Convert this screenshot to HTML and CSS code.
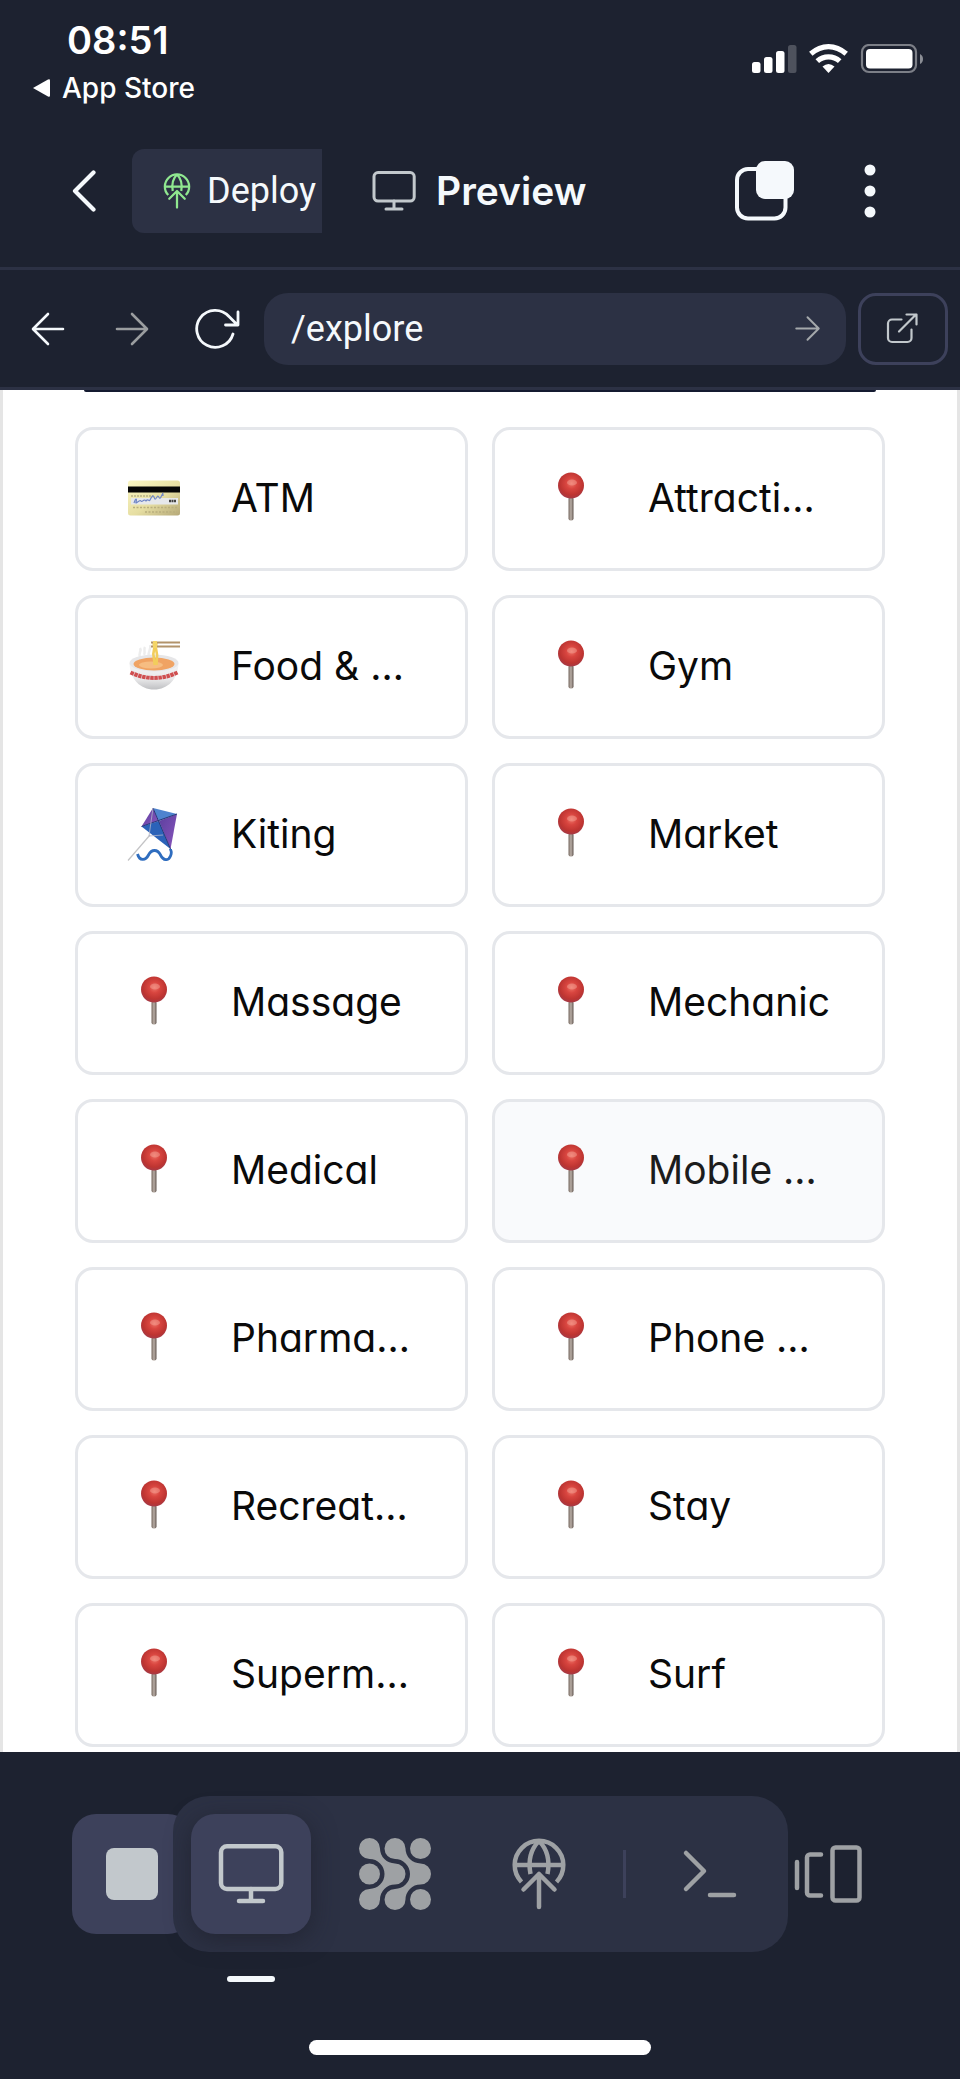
FILE: index.html
```html
<!DOCTYPE html>
<html lang="en">
<head>
<meta charset="utf-8">
<meta name="viewport" content="width=device-width, initial-scale=1">
<title>Preview</title>
<link rel="stylesheet" href="styles.css">
</head>
<body>
<svg class="defs" aria-hidden="true">
  <defs>
    <radialGradient id="ball" cx="0.52" cy="0.42" r="0.6">
      <stop offset="0" stop-color="#ee7468"/>
      <stop offset="0.35" stop-color="#d8453f"/>
      <stop offset="0.75" stop-color="#bd3431"/>
      <stop offset="1" stop-color="#a23a48"/>
    </radialGradient>
    <linearGradient id="stick" x1="0" x2="1" y1="0" y2="0">
      <stop offset="0" stop-color="#75685f"/>
      <stop offset="0.5" stop-color="#b9aea6"/>
      <stop offset="1" stop-color="#5f534d"/>
    </linearGradient>
    <linearGradient id="gold" x1="0" x2="1" y1="0" y2="1">
      <stop offset="0" stop-color="#fbf7c4"/>
      <stop offset="0.55" stop-color="#e6dea2"/>
      <stop offset="1" stop-color="#b5a878"/>
    </linearGradient>
    <linearGradient id="china" x1="0" x2="0" y1="0" y2="1">
      <stop offset="0" stop-color="#f4f4f4"/>
      <stop offset="0.6" stop-color="#e9e9ea"/>
      <stop offset="1" stop-color="#bfc0c3"/>
    </linearGradient>
    <linearGradient id="purple" x1="0" x2="1" y1="0" y2="1">
      <stop offset="0" stop-color="#5b3f9e"/>
      <stop offset="1" stop-color="#8a55bd"/>
    </linearGradient>
    <symbol id="pin" viewBox="0 0 54 54">
      <rect x="24.500" y="26" width="5" height="23.500" rx="2" fill="url(#stick)"/>
      <circle cx="27" cy="14.500" r="13" fill="url(#ball)"/>
      <ellipse cx="28" cy="11.500" rx="5" ry="3" fill="#f7a99c" opacity="0.45"/>
    </symbol>
    <symbol id="card" viewBox="0 0 54 54">
      <rect x="1" y="9.500" width="52" height="35" rx="2.500" fill="url(#gold)"/>
      <rect x="1" y="15.500" width="52" height="6" fill="#050505"/>
      <path d="M4 25h22" stroke="#9b956f" stroke-width="1" stroke-dasharray="2 1"/>
      <rect x="4" y="27" width="47" height="6.500" fill="#e6e8ea"/>
      <path d="M7 32c2-6 3-4 2-1s4-3 5-1 3-3 5 0c2-3 3 1 4-1s3-6 4-3 1 3 3 0 2 4 4 0 2-5 2-1" fill="none" stroke="#6f86c6" stroke-width="1.200"/>
      <path d="M42 30h7" stroke="#444" stroke-width="2.500" stroke-dasharray="2 0.500"/>
      <path d="M6 36.500h44M18 41h32" stroke="#b9ae7e" stroke-width="1.500" stroke-dasharray="2 1.500"/>
    </symbol>
    <symbol id="bowl" viewBox="0 0 54 54">
      <path d="M13 18c-2-4 2-6 0-9M22 17c-2-4 3-7 1-11M17 16c2-3-1-5 1-8" fill="none" stroke="#ededed" stroke-width="2.500"/>
      <path d="M2.500 24C3 40 13 50.500 27 50.500S51 40 51.500 24z" fill="url(#china)"/>
      <ellipse cx="27" cy="24" rx="24.500" ry="8.500" fill="#e6e6e8"/>
      <ellipse cx="27" cy="25" rx="20.500" ry="6.500" fill="#f0a363"/>
      <ellipse cx="24" cy="26" rx="12" ry="3.500" fill="#f6bd82"/>
      <path d="M3.500 33.500Q27 44.500 50.500 33.500" fill="none" stroke="#cf4f50" stroke-width="4" stroke-dasharray="3.500 0.600"/>
      <path d="M26.500 3l.8 6-1 6 1.500 11M29.500 3l-.6 6 1.200 7-.6 10" fill="none" stroke="#f2cd5c" stroke-width="2.600"/>
      <path d="M24 3.500h29M24 7.500h29" stroke="#b2936b" stroke-width="2"/>
      <path d="M28 2v7" stroke="#f4d568" stroke-width="4"/>
    </symbol>
    <symbol id="kite" viewBox="0 0 54 54">
      <path d="M23 28 1 53.500" stroke="#c3c3c5" stroke-width="1.200"/>
      <path d="M26 1 32 14 14.500 19.500z" fill="url(#purple)"/>
      <path d="M26 1 50 7 32 14z" fill="#4e83cf"/>
      <path d="M14.500 19.500 32 14 43.500 42z" fill="#2b62b8"/>
      <path d="M50 7 43.500 42 32 14z" fill="url(#purple)"/>
      <path d="M26 1 43.500 42M14.500 19.500 50 7" stroke="#283a78" stroke-width="1"/>
      <path d="M26 1 22 29l14-1" fill="none" stroke="#aeb4c9" stroke-width="0.800"/>
      <path d="M10.500 47c2 7 8 7 11 1s9-6 12 0 8 6 10 1 0-5 0-7" fill="none" stroke="#2f6dbf" stroke-width="2.800"/>
    </symbol>
    <symbol id="globe" viewBox="0 0 72 72">
      <g fill="none" stroke="currentColor" stroke-width="4.500" stroke-linejoin="round">
        <path d="M18.500 44A24.300 24.300 0 1 1 53.500 44M12 27h48"/>
        <path d="M36 3c-8 8-11 20-8.500 33M36 3c8 8 11 20 8.500 33"/>
        <path d="M20.500 51.500 36 36l15.500 15.500M36 36v33" stroke-linecap="round"/>
      </g>
    </symbol>
    <symbol id="monitor" viewBox="0 0 72 72">
      <g fill="none" stroke="currentColor" stroke-width="4.500" stroke-linecap="round">
        <rect x="6" y="8.300" width="60.300" height="42.700" rx="6"/>
        <path d="M36 51v12M24 63h24"/>
      </g>
    </symbol>
    <symbol id="arrow" viewBox="0 0 36 36">
      <path d="M3 18h29M18 3l15 15-15 15" fill="none" stroke="currentColor" stroke-width="2.600" stroke-linecap="round" stroke-linejoin="round"/>
    </symbol>
  </defs>
</svg>

<header class="status">
  <div class="clock-block">
    <time class="clock">08:51</time>
    <a class="return" href="#"><svg width="18" height="18" viewBox="0 0 18 18"><path d="M1 9 16 .5Q18-.5 18 1.500v15Q18 18.500 16 17.500z" fill="#fff"/></svg>App Store</a>
  </div>
  <svg class="indicators" width="172" height="32" viewBox="0 0 172 32" role="img" aria-label="Signal, Wi-Fi and battery">
    <g fill="#fff">
      <rect x="0" y="18" width="8.500" height="11" rx="2.500"/>
      <rect x="12" y="13" width="8.500" height="16" rx="2.500"/>
      <rect x="24" y="7" width="8.500" height="22" rx="2.500"/>
      <rect x="36" y="1" width="8.500" height="28" rx="2.500" opacity="0.22"/>
      <path d="M76.500 29 70.500 22.500Q76.500 17.500 82.500 22.500z"/>
    </g>
    <g fill="none" stroke="#fff" stroke-width="5.200">
      <path d="M58.800 9.800Q67 2.600 76.500 2.600T94.200 9.800"/>
      <path d="M65.300 17.200Q70 12.800 76.500 12.800T87.700 17.200"/>
    </g>
    <rect x="110" y="1" width="54" height="27" rx="7" fill="none" stroke="#7c7f87" stroke-width="2.200"/>
    <rect x="114" y="5" width="46.500" height="19.500" rx="4" fill="#fff"/>
    <path d="M168 10q3 1.500 3 5t-3 5z" fill="#8b8e95"/>
  </svg>
</header>

<nav class="tabs" aria-label="Workspace">
  <button class="icon-button back" aria-label="Back"><svg width="24" height="42" viewBox="0 0 24 42"><path d="M21.500 2.500 3 21l18.500 18.500" fill="none" stroke="currentColor" stroke-width="4.200" stroke-linecap="round" stroke-linejoin="round"/></svg></button>
  <button class="deploy"><svg class="globe-small"><use href="#globe"/></svg><span>Deploy</span></button>
  <button class="preview"><svg class="monitor-small"><use href="#monitor"/></svg><span>Preview</span></button>
  <button class="icon-button copies" aria-label="Tabs"><svg width="60" height="60" viewBox="0 0 60 60"><rect x="2" y="8" width="48.500" height="49.500" rx="11" fill="none" stroke="currentColor" stroke-width="4"/><rect x="21" y="0" width="38" height="38" rx="9" fill="currentColor"/></svg></button>
  <button class="icon-button more" aria-label="More"><svg width="12" height="54" viewBox="0 0 12 54"><g fill="currentColor"><circle cx="6" cy="6" r="5.500"/><circle cx="6" cy="27" r="5.500"/><circle cx="6" cy="48" r="5.500"/></g></svg></button>
</nav>

<form class="toolbar">
  <button type="button" class="icon-button" aria-label="Go back"><svg class="arrow flip"><use href="#arrow"/></svg></button>
  <button type="button" class="icon-button muted" aria-label="Go forward"><svg class="arrow"><use href="#arrow"/></svg></button>
  <button type="button" class="icon-button reload" aria-label="Reload"><svg width="48" height="42" viewBox="0 0 48 42"><path d="M38 26A18.500 18.500 0 1 1 34 8.500L42 16.500M43 4v13H30.500" fill="none" stroke="currentColor" stroke-width="2.800" stroke-linecap="round" stroke-linejoin="round"/></svg></button>
  <div class="address">
    <input type="text" value="/explore" aria-label="Path">
    <button type="button" class="icon-button" aria-label="Go"><svg class="arrow-small"><use href="#arrow"/></svg></button>
  </div>
  <button type="button" class="external" aria-label="Open in new tab"><svg width="36" height="36" viewBox="0 0 36 36"><path d="M16.500 8.500H7a4 4 0 0 0-4 4V27a4 4 0 0 0 4 4h15.500a4 4 0 0 0 4-4v-8.500M14 20.500 31 3.500M21.500 3.500H31.500V13.500" fill="none" stroke="currentColor" stroke-width="2.200" stroke-linecap="round" stroke-linejoin="round"/></svg></button>
</form>

<main class="page">
  <div class="banner"></div>
  <div class="grid">
    <button class="tile"><svg class="emoji"><use href="#card"/></svg><span>ATM</span></button>
    <button class="tile"><svg class="emoji"><use href="#pin"/></svg><span>Attracti…</span></button>
    <button class="tile"><svg class="emoji"><use href="#bowl"/></svg><span>Food &amp; …</span></button>
    <button class="tile"><svg class="emoji"><use href="#pin"/></svg><span>Gym</span></button>
    <button class="tile"><svg class="emoji"><use href="#kite"/></svg><span>Kiting</span></button>
    <button class="tile"><svg class="emoji"><use href="#pin"/></svg><span>Market</span></button>
    <button class="tile"><svg class="emoji"><use href="#pin"/></svg><span>Massage</span></button>
    <button class="tile"><svg class="emoji"><use href="#pin"/></svg><span>Mechanic</span></button>
    <button class="tile"><svg class="emoji"><use href="#pin"/></svg><span>Medical</span></button>
    <button class="tile tile-hover"><svg class="emoji"><use href="#pin"/></svg><span>Mobile …</span></button>
    <button class="tile"><svg class="emoji"><use href="#pin"/></svg><span>Pharma…</span></button>
    <button class="tile"><svg class="emoji"><use href="#pin"/></svg><span>Phone …</span></button>
    <button class="tile"><svg class="emoji"><use href="#pin"/></svg><span>Recreat…</span></button>
    <button class="tile"><svg class="emoji"><use href="#pin"/></svg><span>Stay</span></button>
    <button class="tile"><svg class="emoji"><use href="#pin"/></svg><span>Superm…</span></button>
    <button class="tile"><svg class="emoji"><use href="#pin"/></svg><span>Surf</span></button>
  </div>
</main>

<footer class="dock">
  <div class="dock-row">
    <button class="dock-button filled" aria-label="Stop"><svg width="54" height="54" viewBox="0 0 54 54"><rect x="1" y="1" width="52" height="52" rx="8" fill="currentColor"/></svg></button>
    <div class="tray">
      <button class="dock-button filled active" aria-label="Preview"><svg class="dock-icon"><use href="#monitor"/></svg></button>
      <button class="dock-button" aria-label="Agent"><svg class="dock-icon" viewBox="0 0 72 72"><g fill="currentColor"><path id="link" d="M21 10.500A15 15 0 0 0 36 25.500A10.500 10.500 0 0 1 36 46.500A15 15 0 0 0 21 61.500A10.500 10.500 0 1 1 10.500 51A15 15 0 0 0 10.500 21A10.500 10.500 0 1 1 21 10.500Z"/><use href="#link" x="25.500"/><circle cx="10.500" cy="36" r="10.500"/><circle cx="61.500" cy="10.500" r="10.500"/><circle cx="61.500" cy="61.500" r="10.500"/></g></svg></button>
      <button class="dock-button" aria-label="Deploy"><svg class="dock-icon"><use href="#globe"/></svg></button>
      <span class="divider"></span>
      <button class="dock-button" aria-label="Console"><svg class="dock-icon" viewBox="0 0 72 72"><path d="M12 15l18 18-18 18M36 57h24" fill="none" stroke="currentColor" stroke-width="4.500" stroke-linecap="round" stroke-linejoin="round"/></svg></button>
    </div>
    <button class="dock-button windows" aria-label="Windows"><svg class="dock-icon" viewBox="0 0 72 72"><path d="M5 24v26M29 16.500H18a3 3 0 0 0-3 3v35a3 3 0 0 0 3 3h11" fill="none" stroke="currentColor" stroke-width="4.500" stroke-linecap="round"/><rect x="40.500" y="9.500" width="27" height="53" rx="3" fill="none" stroke="currentColor" stroke-width="4.500"/></svg></button>
  </div>
  <div class="marker"></div>
  <div class="home"></div>
</footer>
</body>
</html>
```
FILE: styles.css
```css
* { box-sizing: border-box; }
body {
  margin: 0;
  min-height: 100vh;
  display: flex;
  flex-direction: column;
  background: #1d2230;
  color: #f5f9fc;
  font-family: Inter, "Liberation Sans", sans-serif;
}
button {
  margin: 0;
  padding: 0;
  border: 0;
  background: none;
  color: inherit;
  font: inherit;
}
svg { display: block; flex: none; }
.defs { position: absolute; width: 0; height: 0; }
.icon-button { display: flex; align-items: center; justify-content: center; }

.status {
  display: flex;
  justify-content: space-between;
  align-items: flex-start;
  height: 116px;
  padding: 16px 36px 0 32px;
  color: #fff;
}
.clock-block { display: flex; flex-direction: column; }
.clock {
  padding-left: 35px;
  font-size: 38px;
  line-height: 48px;
  font-weight: 600;
}
.return {
  display: flex;
  align-items: center;
  gap: 12px;
  color: #fff;
  font-size: 28px;
  line-height: 48px;
  font-weight: 500;
  text-decoration: none;
}
.indicators { margin-top: 28px; }

.tabs {
  display: flex;
  align-items: center;
  height: 154px;
  padding: 0 84px 2px 72px;
  border-bottom: 3px solid #2c3144;
}
.deploy {
  display: flex;
  align-items: center;
  gap: 12px;
  width: 190px;
  height: 84px;
  margin-left: 36px;
  padding-left: 27px;
  overflow: hidden;
  border-radius: 12px 0 0 12px;
  background: #2c3144;
  font-family: Roboto, sans-serif;
  font-size: 36px;
  line-height: 48px;
}
.globe-small { width: 36px; height: 36px; color: #90e890; }
.preview {
  display: flex;
  align-items: center;
  gap: 18px;
  margin-left: 48px;
  font-size: 39px;
  line-height: 48px;
  font-weight: 600;
}
.monitor-small { width: 48px; height: 48px; color: #c2c8cc; }
.copies { margin-left: auto; }
.more { margin-left: 69px; }

.toolbar {
  display: flex;
  align-items: center;
  height: 120px;
  padding: 0 12px 0 30px;
  border-bottom: 3px solid #2c3144;
}
.arrow { width: 36px; height: 36px; }
.arrow-small { width: 27px; height: 27px; }
.flip { transform: scaleX(-1); }
.muted { margin-left: 48px; color: #9a9d9f; }
.reload { margin-left: 45px; }
.address {
  flex: 1;
  display: flex;
  align-items: center;
  height: 72px;
  margin: 0 12px 0 21px;
  padding: 0 25px 0 27px;
  border-radius: 24px;
  background: #2c3144;
  color: #a4a8ab;
}
.address input {
  flex: 1;
  min-width: 0;
  padding: 0;
  border: 0;
  outline: 0;
  background: none;
  color: #f5f9fc;
  font-family: Roboto, sans-serif;
  font-size: 36px;
  line-height: 48px;
}
.external {
  display: flex;
  align-items: center;
  justify-content: center;
  width: 90px;
  height: 72px;
  border: 3px solid #3d415b;
  border-radius: 18px;
  color: #c2c8cc;
}

.page {
  padding: 0 72px 5px;
  border: solid #e5e5e5;
  border-width: 0 3px;
  background: #fff;
}
.banner {
  height: 2px;
  margin: 0 9px 35px;
  border-radius: 0 0 4px 4px;
  background: #141a30;
}
.grid {
  display: grid;
  grid-template-columns: 1fr 1fr;
  gap: 24px;
}
.tile {
  display: flex;
  align-items: center;
  gap: 50px;
  min-width: 0;
  height: 144px;
  padding: 0 40px 3px 49px;
  border: 3px solid #e5e7eb;
  border-radius: 18px;
  background: #fff;
  color: #0a0a0a;
  font-size: 39px;
  line-height: 48px;
  font-feature-settings: "cv11";
  white-space: nowrap;
}
.tile-hover { background: #f9fafc; color: #1c1c1c; }
.emoji { width: 54px; height: 54px; }

.dock {
  flex: 1;
  display: flex;
  flex-direction: column;
  padding: 44px 72px 24px;
}
.dock-row { display: flex; align-items: center; }
.dock-button {
  flex: none;
  display: flex;
  align-items: center;
  justify-content: center;
  width: 120px;
  height: 120px;
  border-radius: 24px;
  color: #9ea1a4;
}
.filled { background: #3d415b; color: #c2c8cc; }
.dock-icon { width: 72px; height: 72px; }
.tray {
  flex: 1;
  z-index: 1;
  display: flex;
  align-items: center;
  justify-content: space-between;
  height: 156px;
  margin: 0 -20px 0 -19px;
  padding: 0 18px;
  border-radius: 36px;
  background: #2c3144;
}
.active { box-shadow: 0 6px 24px rgba(29, 30, 40, 0.6); }
.windows { z-index: 2; }
.divider { width: 3px; height: 48px; background: #3d415b; }
.marker {
  width: 48px;
  height: 6px;
  margin: 24px 0 0 155px;
  border-radius: 3px;
  background: #f5f9fc;
}
.home {
  width: 342px;
  height: 15px;
  margin: auto auto 0;
  border-radius: 8px;
  background: #fff;
}
```
